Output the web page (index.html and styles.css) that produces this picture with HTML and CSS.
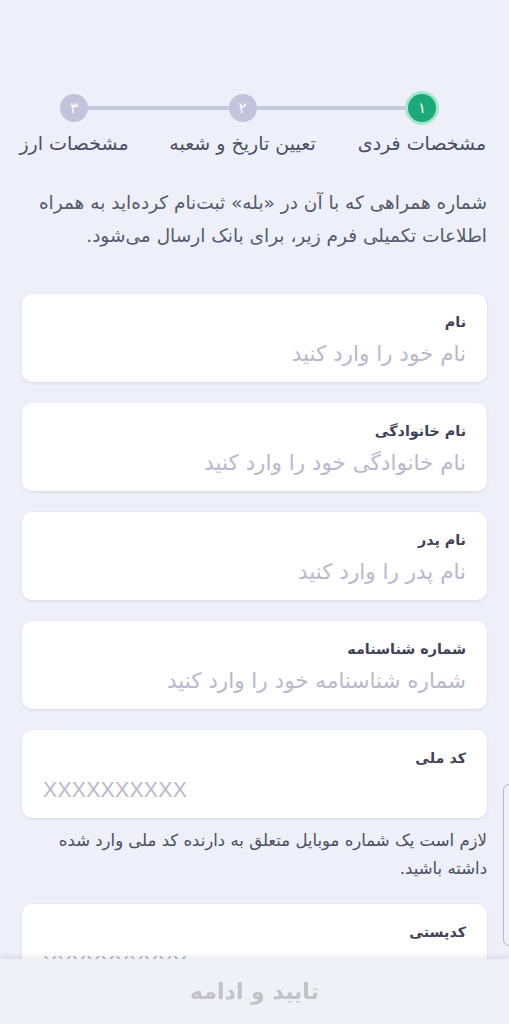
FILE: index.html
```html
<!DOCTYPE html>
<html lang="fa" dir="rtl">
<head>
<meta charset="utf-8">
<link rel="stylesheet" href="styles.css">
</head>
<body>
<div class="page">
  <div class="stepper">
    <div class="line"></div>
    <div class="step active"><span class="dot">۱</span><span class="lbl">مشخصات فردی</span></div>
    <div class="step"><span class="dot">۲</span><span class="lbl">تعیین تاریخ و شعبه</span></div>
    <div class="step"><span class="dot">۳</span><span class="lbl">مشخصات ارز</span></div>
  </div>
  <p class="intro">شماره همراهی که با آن در «بله» ثبت‌نام کرده‌اید به همراه اطلاعات تکمیلی فرم زیر، برای بانک ارسال می‌شود.</p>
  <div class="form">
    <div class="card"><div class="label">نام</div><div class="ph">نام خود را وارد کنید</div></div>
    <div class="card"><div class="label">نام خانوادگی</div><div class="ph">نام خانوادگی خود را وارد کنید</div></div>
    <div class="card"><div class="label">نام پدر</div><div class="ph">نام پدر را وارد کنید</div></div>
    <div class="card"><div class="label">شماره شناسنامه</div><div class="ph">شماره شناسنامه خود را وارد کنید</div></div>
    <div class="group">
      <div class="card"><div class="label">کد ملی</div><div class="ph ltr">XXXXXXXXXX</div></div>
      <p class="hint">لازم است یک شماره موبایل متعلق به دارنده کد ملی وارد شده داشته باشید.</p>
    </div>
    <div class="card"><div class="label">کدپستی</div><div class="ph ltr">XXXXXXXXXX</div></div>
  </div>
</div>
<div class="edge-tab"></div>
<div class="bottom"><span class="btn">تایید و ادامه</span></div>
</body>
</html>
```
FILE: styles.css
```css
html, body {
  margin: 0;
  padding: 0;
  background: #edf0f8;
  height: 1024px;
  overflow: hidden;
}
body {
  font-family: "DejaVu Sans", "Noto Sans", sans-serif;
  color: #4a4d63;
}
.page {
  padding: 94px 22px 0 22px;
}
.stepper {
  position: relative;
  display: grid;
  grid-template-columns: 130px 1fr 108px;
  margin: 0 0 0 -2px;
}
.stepper .line {
  position: absolute;
  top: 12px;
  right: 66px;
  left: 54px;
  height: 4px;
  background: #c6c7e0;
  border-radius: 2px;
}
.step {
  display: flex;
  flex-direction: column;
  align-items: center;
  position: relative;
}
.dot {
  width: 28px;
  height: 28px;
  border-radius: 50%;
  background: #c3c3de;
  color: #fff;
  font-size: 15px;
  display: flex;
  align-items: center;
  justify-content: center;
  line-height: 1;
}
.step.active .dot {
  background: #1ba97a;
  box-shadow: 0 0 0 3px #a7e5cd;
}
.lbl {
  margin-top: 9px;
  font-size: 19px;
  line-height: 24px;
  white-space: nowrap;
  color: #4a4d63;
}
.intro {
  margin: 31px 0 0 0;
  font-size: 18.5px;
  line-height: 33px;
  color: #555a6e;
}
.form {
  margin-top: 42px;
  display: flex;
  flex-direction: column;
  gap: 21px;
}
.card {
  background: #fff;
  border-radius: 10px;
  height: 88px;
  box-sizing: border-box;
  padding: 16px 21px 0 21px;
  box-shadow: 0 1px 3px rgba(60, 60, 90, 0.12);
}
.label {
  font-size: 14.3px;
  font-weight: bold;
  color: #404258;
  line-height: 24px;
}
.ph {
  margin-top: 7px;
  font-size: 21.5px;
  color: #b9b8cd;
  line-height: 26px;
}
.ph.ltr {
  direction: ltr;
  text-align: left;
  font-family: "Liberation Sans", sans-serif;
  font-size: 21.3px;
  letter-spacing: 0.2px;
}
.hint {
  margin: 9px 0 0 0;
  font-size: 16.5px;
  line-height: 28px;
  color: #4a4d63;
}
.edge-tab {
  position: fixed;
  top: 784px;
  right: -8px;
  width: 12px;
  height: 160px;
  border: 1px solid #b8bac6;
  border-radius: 6px;
  background: #eef0f7;
}
.bottom {
  position: fixed;
  left: 0;
  right: 0;
  bottom: 0;
  height: 65px;
  background: #eff1f7;
  box-shadow: 0 -2px 6px rgba(60, 60, 90, 0.12);
  display: flex;
  align-items: center;
  justify-content: center;
}
.btn {
  font-size: 22px;
  font-weight: bold;
  color: #c2c2ca;
}
```
